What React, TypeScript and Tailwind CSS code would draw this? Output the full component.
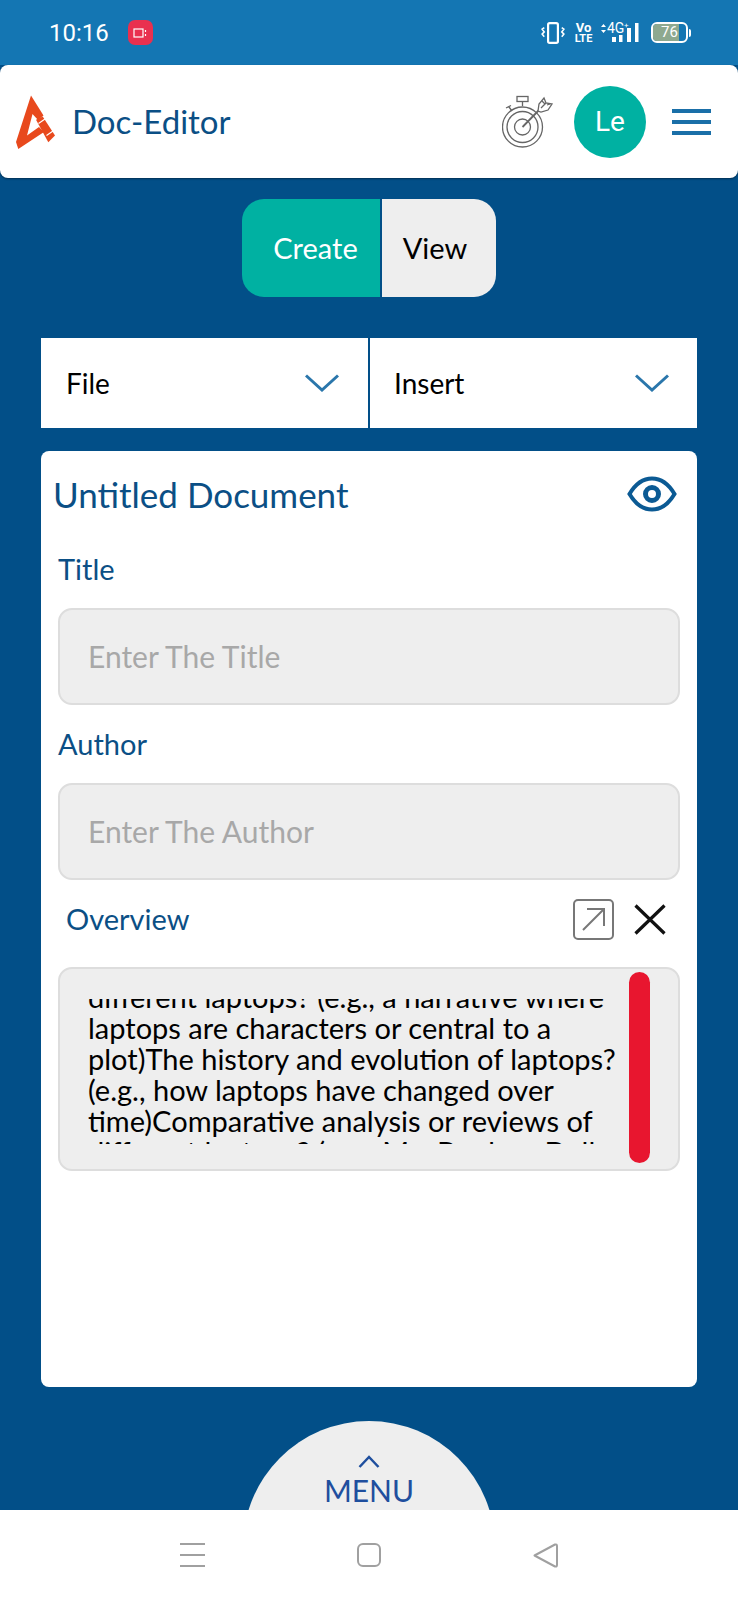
import React from "react";

const font = { fontFamily: "Lato, 'Noto Sans', sans-serif" };

function Logo() {
  return (
    <svg width="42" height="56" viewBox="0 0 42 56" className="shrink-0">
      <path d="M16 1.500 L1 48 L3.300 55 L29 38 L24 33 L12 41.500 L17.500 20 L23 26 L28.500 21.500 Z" fill="#e8491d" />
      <path d="M21 25.800 L27.700 22.500 L40 41.500 L33.300 48.200 Z" fill="#e8491d" />
      <path d="M23.500 29.500 L30 25 M31.500 41.500 L38 37" stroke="#fff" strokeWidth="1.200" />
    </svg>
  );
}

function Target() {
  return (
    <svg width="54" height="54" viewBox="0 0 54 54" fill="none" stroke="#666" strokeWidth="1.3" className="shrink-0">
      <rect x="15" y="1.5" width="11" height="5" />
      <path d="M20.5 6.5V11M4 13l5-2.5M7 12l3 4" />
      <circle cx="20.5" cy="32" r="20" />
      <circle cx="20.5" cy="32" r="15.5" />
      <circle cx="20.5" cy="32" r="8" />
      <path d="M20.5 32L39 13" strokeWidth="1.8" />
      <path d="M36 16l1-7 5-6 2 5 6 1 -4 6 -7 2z" fill="#fff" />
      <path d="M39 13l5-5M40 6l3 3M45 10l3-1" />
    </svg>
  );
}

function StatusIcons() {
  return (
    <div className="flex items-center text-white" style={{ fontFamily: "Roboto, sans-serif" }}>
      <svg width="24" height="24" viewBox="0 0 22 22" fill="none" stroke="#fff" className="mr-[10px]">
        <rect x="6.5" y="2" width="9" height="18" rx="1.5" strokeWidth="2" />
        <path d="M3 6l-2 1.500L3 10l-2 2 2 2.500M19 6l2 1.500L19 10l2 2-2 2.500" strokeWidth="1.400" />
      </svg>
      <div className="flex w-[17px] flex-col items-center text-[13px] font-bold leading-[11px] mr-[8px]">
        <span>Vo</span>
        <span className="text-[11px]">LTE</span>
      </div>
      <svg width="40" height="22" viewBox="0 0 40 22" fill="#fff" className="mr-[11px]">
        <path d="M1 5l2.500-3 2.500 3zM1 8l2.500 3 2.500-3z" />
        <text x="7" y="11" fontSize="14" fontFamily="Roboto, sans-serif">4G</text>
        <text x="24" y="6" fontSize="8" fontFamily="Roboto, sans-serif">+</text>
        <rect x="12" y="15" width="4" height="5" />
        <rect x="19" y="13" width="3.500" height="7" />
        <rect x="27" y="6" width="4" height="14" />
        <rect x="35" y="1" width="3.500" height="19" />
      </svg>
      <div className="flex items-center">
        <div className="relative h-[21px] w-[37px] overflow-hidden rounded-[6px] border-2 border-white">
          <div className="h-full w-[26px] bg-[#8ea98f]" />
          <span className="absolute inset-0 flex items-center justify-center text-[15px] leading-none text-white">76</span>
        </div>
        <div className="ml-[1px] h-[8px] w-[2px] rounded-r-sm bg-white" />
      </div>
    </div>
  );
}

function Chevron() {
  return (
    <svg width="34" height="18" viewBox="0 0 34 18" fill="none" stroke="#2a76ab" strokeWidth="3" className="shrink-0">
      <path d="M1 1.500L17 16L33 1.500" />
    </svg>
  );
}

function Field({ label, placeholder, top }: { label: string; placeholder: string; top: string }) {
  return (
    <div className={top}>
      <div className="ml-[17px] h-[36px] text-[29px] leading-[36px] text-[#0b4f85]">{label}</div>
      <div className="mt-[21px] ml-[17px] flex h-[97px] w-[622px] items-center rounded-[14px] border-2 border-[#dddddd] bg-[#eeeeee] pl-[28px] text-[30px] text-[#a8a8a8]">
        {placeholder}
      </div>
    </div>
  );
}

const lines = [
  "different laptops? (e.g., a narrative where",
  "laptops are characters or central to a",
  "plot)The history and evolution of laptops?",
  "(e.g., how laptops have changed over",
  "time)Comparative analysis or reviews of",
  "different laptops? (e.g., MacBook vs Dell",
];

export default function App() {
  return (
    <div className="flex h-[1600px] w-[738px] flex-col overflow-hidden bg-[#024f88]" style={font}>
      <div className="flex h-[65px] shrink-0 items-center justify-between bg-[#1476b3] pl-[49px] pr-[47px]">
        <div className="flex items-center">
          <span className="text-[24px] text-white" style={{ fontFamily: "Roboto, sans-serif" }}>10:16</span>
          <div className="ml-[19px] flex h-[25px] w-[25px] items-center justify-center rounded-[7px] bg-[#e9304f]">
            <svg width="15" height="10" viewBox="0 0 15 10" fill="none" stroke="#fff" strokeWidth="1.200">
              <rect x="1" y="1" width="9" height="8" />
              <path d="M12.500 2v2M12.500 6v2" />
            </svg>
          </div>
        </div>
        <StatusIcons />
      </div>

      <div className="flex h-[113px] shrink-0 items-center rounded-[8px] bg-white pl-[15px] pr-[27px] shadow-[0_1px_2px_rgba(0,0,0,0.4)]">
        <Logo />
        <span className="ml-[15px] text-[33px] text-[#0b4f85]">Doc-Editor</span>
        <div className="ml-auto flex items-center">
          <Target />
          <div className="ml-[18px] flex h-[72px] w-[72px] items-center justify-center rounded-full bg-[#00b1a2] text-[28px] text-white" style={{ fontFamily: "Roboto, sans-serif" }}>
            Le
          </div>
          <div className="ml-[26px] flex w-[39px] flex-col gap-[7px]">
            <div className="h-[4px] bg-[#1a6fa8]" />
            <div className="h-[4px] bg-[#1a6fa8]" />
            <div className="h-[4px] bg-[#1a6fa8]" />
          </div>
        </div>
      </div>

      <div className="flex min-h-0 flex-1 flex-col overflow-hidden">
        <div className="mt-[21px] ml-[242px] flex h-[98px] w-[254px] shrink-0 overflow-hidden rounded-[22px] text-[29px]">
          <div className="flex w-[138px] items-center justify-center bg-[#00b1a2] pl-[9px] text-white">Create</div>
          <div className="ml-[2px] flex flex-1 items-center justify-center bg-[#eeeeee] pr-[8px] text-black">View</div>
        </div>

        <div className="mt-[41px] ml-[41px] flex h-[90px] w-[656px] shrink-0 text-[28px] text-black">
          <div className="flex w-[327px] items-center justify-between bg-white pl-[25px] pr-[29px]">
            <span>File</span>
            <Chevron />
          </div>
          <div className="ml-[2px] flex flex-1 items-center justify-between bg-white pl-[24px] pr-[28px]">
            <span>Insert</span>
            <Chevron />
          </div>
        </div>

        <div className="mt-[23px] ml-[41px] h-[936px] w-[656px] shrink-0 rounded-[8px] bg-white">
          <div className="flex items-center justify-between pl-[12px] pr-[20px] pt-[23px]">
            <span className="text-[35px] leading-[40px] text-[#0b4f85]">Untitled Document</span>
            <svg width="50" height="36" viewBox="0 0 50 36" fill="none" className="shrink-0">
              <path d="M2.500 18C9 7 17 2.500 25 2.500S41 7 47.500 18C41 29 33 33.500 25 33.500S9 29 2.500 18Z" stroke="#0b5a94" strokeWidth="4" />
              <circle cx="25" cy="18" r="6.500" stroke="#0b5a94" strokeWidth="5" />
            </svg>
          </div>
          <Field label="Title" placeholder="Enter The Title" top="mt-[37px]" />
          <Field label="Author" placeholder="Enter The Author" top="mt-[21px]" />
          <div className="mt-[19px] flex h-[40px] items-center pl-[25px] pr-[31px]">
            <span className="text-[29px] text-[#0b4f85]">Overview</span>
            <svg width="41" height="41" viewBox="0 0 41 41" fill="none" className="ml-auto shrink-0">
              <rect x="1" y="1" width="39" height="39" rx="4" stroke="#777" strokeWidth="2" />
              <path d="M10 31L31 10M14 10H31V27" stroke="#777" strokeWidth="2" />
            </svg>
            <svg width="32" height="31" viewBox="0 0 32 31" fill="none" stroke="#111" strokeWidth="3.200" className="ml-[20px] shrink-0">
              <path d="M1.500 1.500L30.500 29.500M30.500 1.500L1.500 29.500" />
            </svg>
          </div>
          <div className="mt-[28px] ml-[17px] flex h-[204px] w-[622px] rounded-[14px] border-2 border-[#dddddd] bg-[#eeeeee]">
            <div className="mt-[30px] ml-[28px] h-[145px] w-[536px] overflow-hidden">
              <div className="-mt-[18px] whitespace-nowrap text-[29px] leading-[31px] text-black">
                {lines.map((l) => (
                  <div key={l}>{l}</div>
                ))}
              </div>
            </div>
            <div className="mt-[3px] ml-[5px] h-[191px] w-[21px] rounded-full bg-[#e8162f]" />
          </div>
        </div>

        <div className="mt-[34px] ml-[243px] flex h-[252px] w-[252px] shrink-0 flex-col items-center rounded-full bg-[#eeeeee]">
          <svg width="22" height="13" viewBox="0 0 22 13" fill="none" stroke="#1f4f9e" strokeWidth="2.500" className="mt-[34px]">
            <path d="M1.500 12L11 2l9.500 10" />
          </svg>
          <span className="mt-[6px] text-[30px] leading-[32px] text-[#1f4f9e]">MENU</span>
        </div>
      </div>

      <div className="flex h-[90px] shrink-0 items-start bg-white pt-[33px]">
        <div className="ml-[180px] flex w-[25px] flex-col gap-[9px]">
          <div className="h-[2px] bg-[#a0a0a0]" />
          <div className="h-[2px] bg-[#a0a0a0]" />
          <div className="h-[2px] bg-[#a0a0a0]" />
        </div>
        <div className="ml-[152px] h-[24px] w-[24px] rounded-[6px] border-2 border-[#a0a0a0]" />
        <svg width="25" height="25" viewBox="0 0 25 25" fill="none" className="ml-[152px] shrink-0">
          <path d="M1.500 12.500L22 1.500Q24 1 24 3V22Q24 24 22 23.500Z" stroke="#a0a0a0" strokeWidth="2" strokeLinejoin="round" />
        </svg>
      </div>
    </div>
  );
}
